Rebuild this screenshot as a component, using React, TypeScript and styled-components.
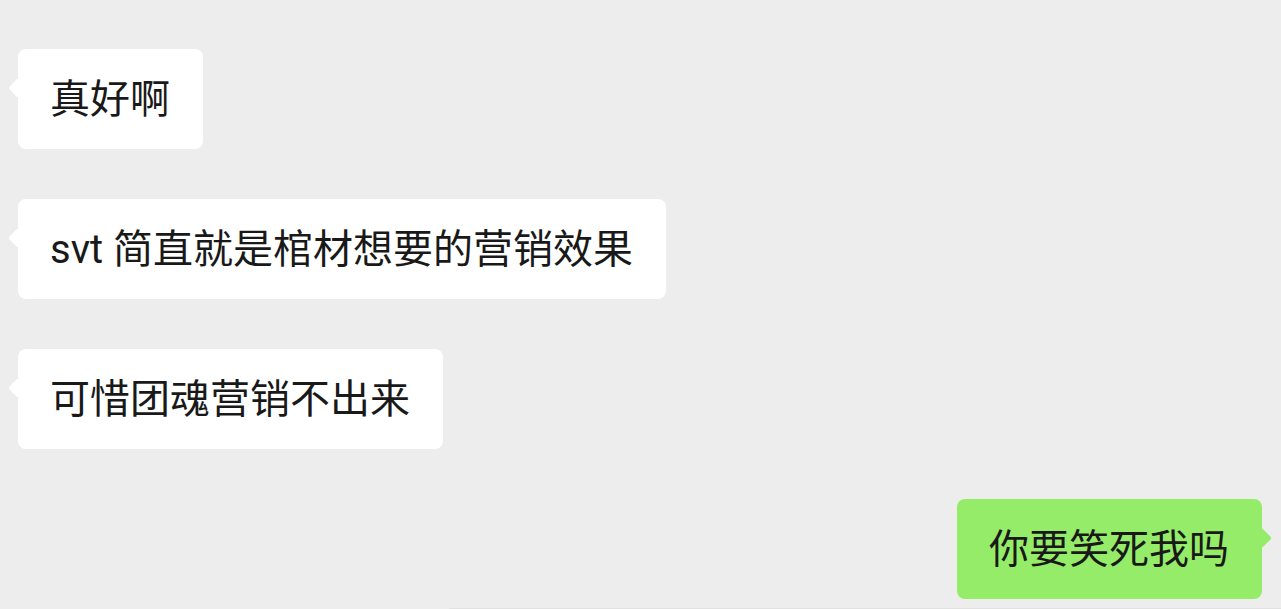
import React from "react";
import styled, { createGlobalStyle, css } from "styled-components";

const GlobalStyle = createGlobalStyle`
  html, body {
    margin: 0;
    padding: 0;
    background: #ededed;
    overflow: hidden;
  }
  body {
    font-family: Roboto, "Noto Sans CJK SC", "Noto Sans", sans-serif;
  }
`;

const Page = styled.div`
  width: 1281px;
  height: 609px;
  background: #ededed;
  display: flex;
  flex-direction: column;
  overflow: hidden;
`;

const Thread = styled.div`
  display: flex;
  flex-direction: column;
  gap: 50px;
  padding: 49px 19px 0 18px;
`;

const Row = styled.div<{ $mine?: boolean }>`
  display: flex;
  justify-content: ${(p) => (p.$mine ? "flex-end" : "flex-start")};
`;

const Bubble = styled.div<{ $mine?: boolean }>`
  position: relative;
  box-sizing: border-box;
  height: 100px;
  padding: 2px 33px 0 32px;
  display: flex;
  align-items: center;
  border-radius: 8px;
  font-size: 40px;
  line-height: 40px;
  color: #191919;
  white-space: nowrap;
  background: ${(p) => (p.$mine ? "#95ec69" : "#ffffff")};

  &::before {
    content: "";
    position: absolute;
    top: 32px;
    width: 14px;
    height: 14px;
    border-radius: 2px;
    background: inherit;
    transform: rotate(45deg);
    ${(p) =>
      p.$mine
        ? css`
            right: -7px;
          `
        : css`
            left: -7px;
          `}
  }
`;

const Footer = styled.div`
  margin-top: 9px;
  margin-left: 449px;
  height: 10px;
  background: #e1e1e1;
  border-top-left-radius: 4px;
`;

const messages: { text: string; mine?: boolean }[] = [
  { text: "真好啊" },
  { text: "svt 简直就是棺材想要的营销效果" },
  { text: "可惜团魂营销不出来" },
  { text: "你要笑死我吗", mine: true },
];

export default function App() {
  return (
    <>
      <GlobalStyle />
      <Page>
        <Thread>
          {messages.map((m, i) => (
            <Row key={i} $mine={m.mine}>
              <Bubble $mine={m.mine}>{m.text}</Bubble>
            </Row>
          ))}
        </Thread>
        <Footer />
      </Page>
    </>
  );
}
